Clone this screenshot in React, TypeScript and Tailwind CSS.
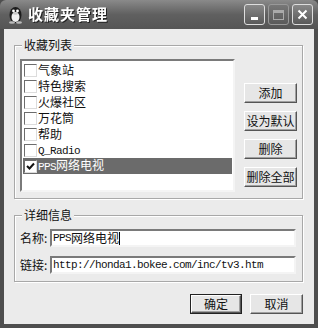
import React from "react";

const cn = "font-['SimSun','Noto_Sans_CJK_SC',sans-serif]";

function Check({ checked }: { checked?: boolean }) {
  return (
    <span className="w-[13px] h-[13px] shrink-0 bg-white border border-t-[#6c6c6c] border-l-[#6c6c6c] border-b-[#dcdcdc] border-r-[#dcdcdc] flex items-center justify-center">
      {checked && (
        <svg width="9" height="9" viewBox="0 0 9 9">
          <path d="M1 4 L3.5 6.5 L8 1.5" fill="none" stroke="#111" strokeWidth="2" />
        </svg>
      )}
    </span>
  );
}

function Btn({ label, focus, w = "w-[53px]" }: { label: string; focus?: boolean; w?: string }) {
  return (
    <div className={`${w} h-[20px] ${focus ? "border border-[#222]" : ""}`}>
      <div className="w-full h-full bg-[#e6e6e6] border border-t-white border-l-white border-b-[#555] border-r-[#555] shadow-[inset_-1px_-1px_0_#a0a0a0] flex items-center justify-center text-[12px] text-[#111] leading-none">
        {label}
      </div>
    </div>
  );
}

const Mono = ({ children }: { children: React.ReactNode }) => (
  <span className="font-['Liberation_Mono',monospace] text-[11px] tracking-[-0.6px]">{children}</span>
);

const items: { text: React.ReactNode; checked?: boolean }[] = [
  { text: "气象站" },
  { text: "特色搜索" },
  { text: "火爆社区" },
  { text: "万花筒" },
  { text: "帮助" },
  { text: <Mono>Q_Radio</Mono> },
  { text: <><Mono>PPS</Mono>网络电视</>, checked: true },
];

export default function App() {
  return (
    <div className={`w-[318px] h-[328px] bg-[#4e4e4e] flex flex-col ${cn}`}>
      {/* title bar */}
      <div className="h-[29px] shrink-0 rounded-t-[6px] bg-gradient-to-b from-[#8a8a8a] via-[#606060] to-[#555] flex items-center pl-[7px] pr-[5px]">
        <svg width="17" height="18" viewBox="0 0 17 18">
          <ellipse cx="8.5" cy="9" rx="6" ry="8" fill="#1c1c1c" />
          <ellipse cx="8.5" cy="11" rx="4" ry="5" fill="#f0f0f0" />
          <circle cx="6.5" cy="5" r="1.4" fill="#fff" />
          <circle cx="10.5" cy="5" r="1.4" fill="#fff" />
          <ellipse cx="8.5" cy="7.5" rx="2.5" ry="1.2" fill="#c8c8c8" />
          <ellipse cx="5" cy="16.5" rx="3" ry="1.3" fill="#bbb" />
          <ellipse cx="12" cy="16.5" rx="3" ry="1.3" fill="#bbb" />
        </svg>
        <span className="ml-[4px] text-white font-bold text-[15px] tracking-[1px] drop-shadow-[1px_1px_0_#222]">收藏夹管理</span>
        <div className="ml-auto flex gap-[3px]">
          <div className="w-[21px] h-[21px] rounded-[3px] border border-[#ddd] bg-gradient-to-b from-[#888] to-[#5a5a5a] flex items-end justify-center pb-[4px]">
            <div className="w-[7px] h-[3px] bg-white" />
          </div>
          <div className="w-[21px] h-[21px] rounded-[3px] border border-[#999] bg-gradient-to-b from-[#777] to-[#5a5a5a] flex items-center justify-center">
            <div className="w-[11px] h-[10px] border border-[#aaa] border-t-[3px]" />
          </div>
          <div className="w-[21px] h-[21px] rounded-[3px] border border-[#ddd] bg-gradient-to-b from-[#888] to-[#5a5a5a] flex items-center justify-center">
            <svg width="11" height="11" viewBox="0 0 11 11">
              <path d="M1.5 1.5 L9.5 9.5 M9.5 1.5 L1.5 9.5" stroke="#fff" strokeWidth="2" />
            </svg>
          </div>
        </div>
      </div>

      {/* body */}
      <div className="flex-1 mx-[4px] mb-[4px] bg-[#ebebeb] flex flex-col pl-[10px] pt-[16px] text-[12px] text-[#111]">
        {/* group 1 */}
        <div className="relative w-[289px] h-[154px] border border-[#a8a8a8] shadow-[inset_1px_1px_0_#fff,1px_1px_0_#fff] flex pl-[5px] pt-[13px]">
          <span className="absolute -top-[8px] left-[7px] bg-[#ebebeb] px-[2px] leading-[14px]">收藏列表</span>
          <div className="w-[215px] h-[133px] bg-white border-2 border-t-[#7a7a7a] border-l-[#7a7a7a] border-b-[#f4f4f4] border-r-[#f4f4f4] pt-[1px] pl-[1px] pr-[1px]">
            {items.map((it, i) => (
              <div
                key={i}
                className={`h-[16px] flex items-center pl-[1px] leading-none ${it.checked ? "bg-[#6b6b6b] text-white" : ""}`}
              >
                <Check checked={it.checked} />
                <span className="ml-[1px]">{it.text}</span>
              </div>
            ))}
          </div>
          <div className="ml-[9px] pt-[24px] flex flex-col gap-[8px]">
            <Btn label="添加" />
            <Btn label="设为默认" />
            <Btn label="删除" />
            <Btn label="删除全部" />
          </div>
        </div>

        {/* group 2 */}
        <div className="relative mt-[16px] w-[289px] h-[67px] border border-[#a8a8a8] shadow-[inset_1px_1px_0_#fff,1px_1px_0_#fff] flex flex-col pl-[5px] pt-[13px] gap-[9px]">
          <span className="absolute -top-[8px] left-[7px] bg-[#ebebeb] px-[2px] leading-[14px]">详细信息</span>
          <div className="flex items-center">
            <span className="w-[30px] leading-none">名称:</span>
            <div className="w-[246px] h-[18px] bg-white border-2 border-t-[#7a7a7a] border-l-[#7a7a7a] border-b-[#f4f4f4] border-r-[#f4f4f4] flex items-center pl-[1px] leading-none">
              <Mono>PPS</Mono>网络电视<span className="w-[1px] h-[13px] bg-black" />
            </div>
          </div>
          <div className="flex items-center">
            <span className="w-[30px] leading-none">链接:</span>
            <div className="w-[246px] h-[18px] bg-white border-2 border-t-[#7a7a7a] border-l-[#7a7a7a] border-b-[#f4f4f4] border-r-[#f4f4f4] flex items-center pl-[1px] leading-none">
              <Mono>http://honda1.bokee.com/inc/tv3.htm</Mono>
            </div>
          </div>
        </div>

        {/* bottom buttons */}
        <div className="mt-[12px] w-[289px] flex justify-end gap-[8px]">
          <Btn label="确定" focus w="w-[52px]" />
          <Btn label="取消" w="w-[53px]" />
        </div>
      </div>
    </div>
  );
}
